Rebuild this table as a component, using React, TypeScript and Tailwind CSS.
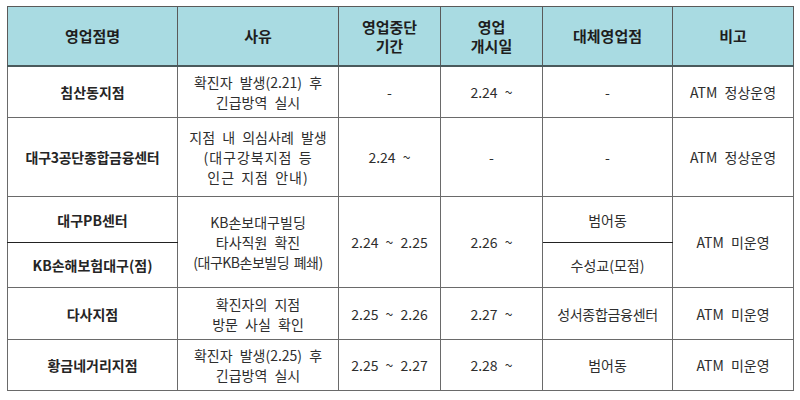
export default function App() {
  const th =
    'border border-[#5a5a5a] border-b-2 border-b-[#4a5a5c] bg-[#a9dbe2] text-[15px] font-bold text-[#1e1e1e] leading-[19px] text-center align-middle';
  const td =
    'border border-[#6a6a6a] text-[14px] text-[#2e2e2e] leading-[20px] text-center align-middle [word-spacing:4px]';
  const name = `${td} font-bold text-[#252525] text-[14.5px]`;

  return (
    <div className="w-[800px] h-[400px] bg-white pl-[7px] pt-[6px]" style={{ fontFamily: '"Noto Sans CJK KR", "Noto Sans", sans-serif' }}>
      <table className="border-collapse table-fixed w-[786px]">
        <colgroup>
          <col className="w-[170px]" />
          <col className="w-[161px]" />
          <col className="w-[102px]" />
          <col className="w-[102px]" />
          <col className="w-[130px]" />
          <col className="w-[121px]" />
        </colgroup>
        <thead>
          <tr className="h-[59px]">
            <th className={th}>영업점명</th>
            <th className={th}>사유</th>
            <th className={th}>
              영업중단
              <br />
              기간
            </th>
            <th className={th}>
              영업
              <br />
              개시일
            </th>
            <th className={th}>대체영업점</th>
            <th className={th}>비고</th>
          </tr>
        </thead>
        <tbody>
          <tr className="h-[52px]">
            <td className={name}>침산동지점</td>
            <td className={td}>
              확진자 발생(2.21) 후
              <br />
              긴급방역 실시
            </td>
            <td className={td}>-</td>
            <td className={td}>2.24 ~</td>
            <td className={td}>-</td>
            <td className={td}>ATM 정상운영</td>
          </tr>
          <tr className="h-[79px]">
            <td className={`${name} tracking-[-0.3px]`}>대구3공단종합금융센터</td>
            <td className={td}>
              지점 내 의심사례 발생
              <br />
              <span className="tracking-[1px] [word-spacing:2px]">(대구강북지점 등</span>
              <br />
              <span className="tracking-[1px] [word-spacing:2px]">인근 지점 안내)</span>
            </td>
            <td className={td}>2.24 ~</td>
            <td className={td}>-</td>
            <td className={td}>-</td>
            <td className={td}>ATM 정상운영</td>
          </tr>
          <tr className="h-[46px]">
            <td className={`${name} border-b-[#222]`}>대구PB센터</td>
            <td className={td} rowSpan={2}>
              KB손보대구빌딩
              <br />
              타사직원 확진
              <br />
              <span className="tracking-[-0.5px] [word-spacing:2px]">(대구KB손보빌딩 폐쇄)</span>
            </td>
            <td className={td} rowSpan={2}>2.24 ~ 2.25</td>
            <td className={td} rowSpan={2}>2.26 ~</td>
            <td className={`${td} border-b-[#222]`}>범어동</td>
            <td className={td} rowSpan={2}>ATM 미운영</td>
          </tr>
          <tr className="h-[45px]">
            <td className={name}>KB손해보험대구(점)</td>
            <td className={td}>수성교(모점)</td>
          </tr>
          <tr className="h-[52px]">
            <td className={name}>다사지점</td>
            <td className={td}>
              확진자의 지점
              <br />
              방문 사실 확인
            </td>
            <td className={td}>2.25 ~ 2.26</td>
            <td className={td}>2.27 ~</td>
            <td className={`${td} tracking-[-0.3px]`}>성서종합금융센터</td>
            <td className={td}>ATM 미운영</td>
          </tr>
          <tr className="h-[51px]">
            <td className={name}>황금네거리지점</td>
            <td className={td}>
              확진자 발생(2.25) 후
              <br />
              긴급방역 실시
            </td>
            <td className={td}>2.25 ~ 2.27</td>
            <td className={td}>2.28 ~</td>
            <td className={td}>범어동</td>
            <td className={td}>ATM 미운영</td>
          </tr>
        </tbody>
      </table>
    </div>
  );
}
